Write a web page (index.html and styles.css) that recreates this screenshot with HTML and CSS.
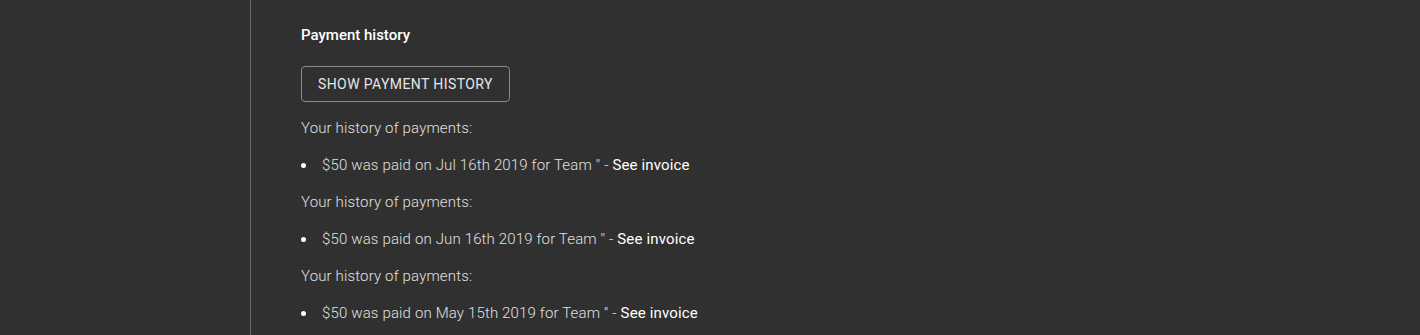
FILE: index.html
```html
<!DOCTYPE html>
<html lang="en">
<head>
    <meta charset="UTF-8">
    <meta name="viewport" content="width=device-width, initial-scale=1.0">
    <title>Payment history</title>
    <link rel="stylesheet" href="styles.css">
</head>
<body>
    <div class="layout">
        <aside class="sidebar"></aside>
        <main class="content">
            <h3>Payment history</h3>
            <button class="outline-btn">Show payment history</button>

            <p>Your history of payments:</p>
            <ul>
                <li>$50 was paid on Jul 16th 2019 for Team '' -&nbsp;<a href="#">See invoice</a></li>
            </ul>
            <p>Your history of payments:</p>
            <ul>
                <li>$50 was paid on Jun 16th 2019 for Team '' -&nbsp;<a href="#">See invoice</a></li>
            </ul>
            <p>Your history of payments:</p>
            <ul>
                <li>$50 was paid on May 15th 2019 for Team '' -&nbsp;<a href="#">See invoice</a></li>
            </ul>
        </main>
    </div>
</body>
</html>
```

FILE: styles.css
```css
body {
    margin: 0;
    background-color: #303030;
    color: #e0e0e0;
    font-family: Roboto, 'Noto Sans', sans-serif;
    font-size: 15px;
    font-weight: 300;
    letter-spacing: 0.15px;
    line-height: 21px;
    overflow: hidden;
}

.layout {
    display: flex;
    min-height: 100vh;
}

.sidebar {
    width: 250px;
    flex-shrink: 0;
    border-right: 1px solid #6b6b6b;
}

.content {
    padding: 25px 50px 0 50px;
}

h3 {
    margin: 0 0 20px 0;
    font-size: 15px;
    font-weight: 500;
    letter-spacing: 0;
    color: #fff;
}

.outline-btn {
    display: block;
    height: 36px;
    padding: 0 16px;
    background: transparent;
    border: 1px solid #8a8a8a;
    border-radius: 4px;
    color: #e6e6e6;
    font-family: inherit;
    font-size: 14px;
    font-weight: 400;
    letter-spacing: 0.4px;
    text-transform: uppercase;
    cursor: pointer;
}

p {
    margin: 16px 0;
}

ul {
    margin: 16px 0;
    padding: 0;
    list-style: none;
}

li {
    display: flex;
    align-items: center;
}

li::before {
    content: "";
    width: 5px;
    height: 5px;
    margin: 0 16px 0 0;
    border-radius: 50%;
    background: #fff;
    flex-shrink: 0;
}

a {
    color: #fff;
    font-weight: 400;
    text-decoration: none;
}
```
